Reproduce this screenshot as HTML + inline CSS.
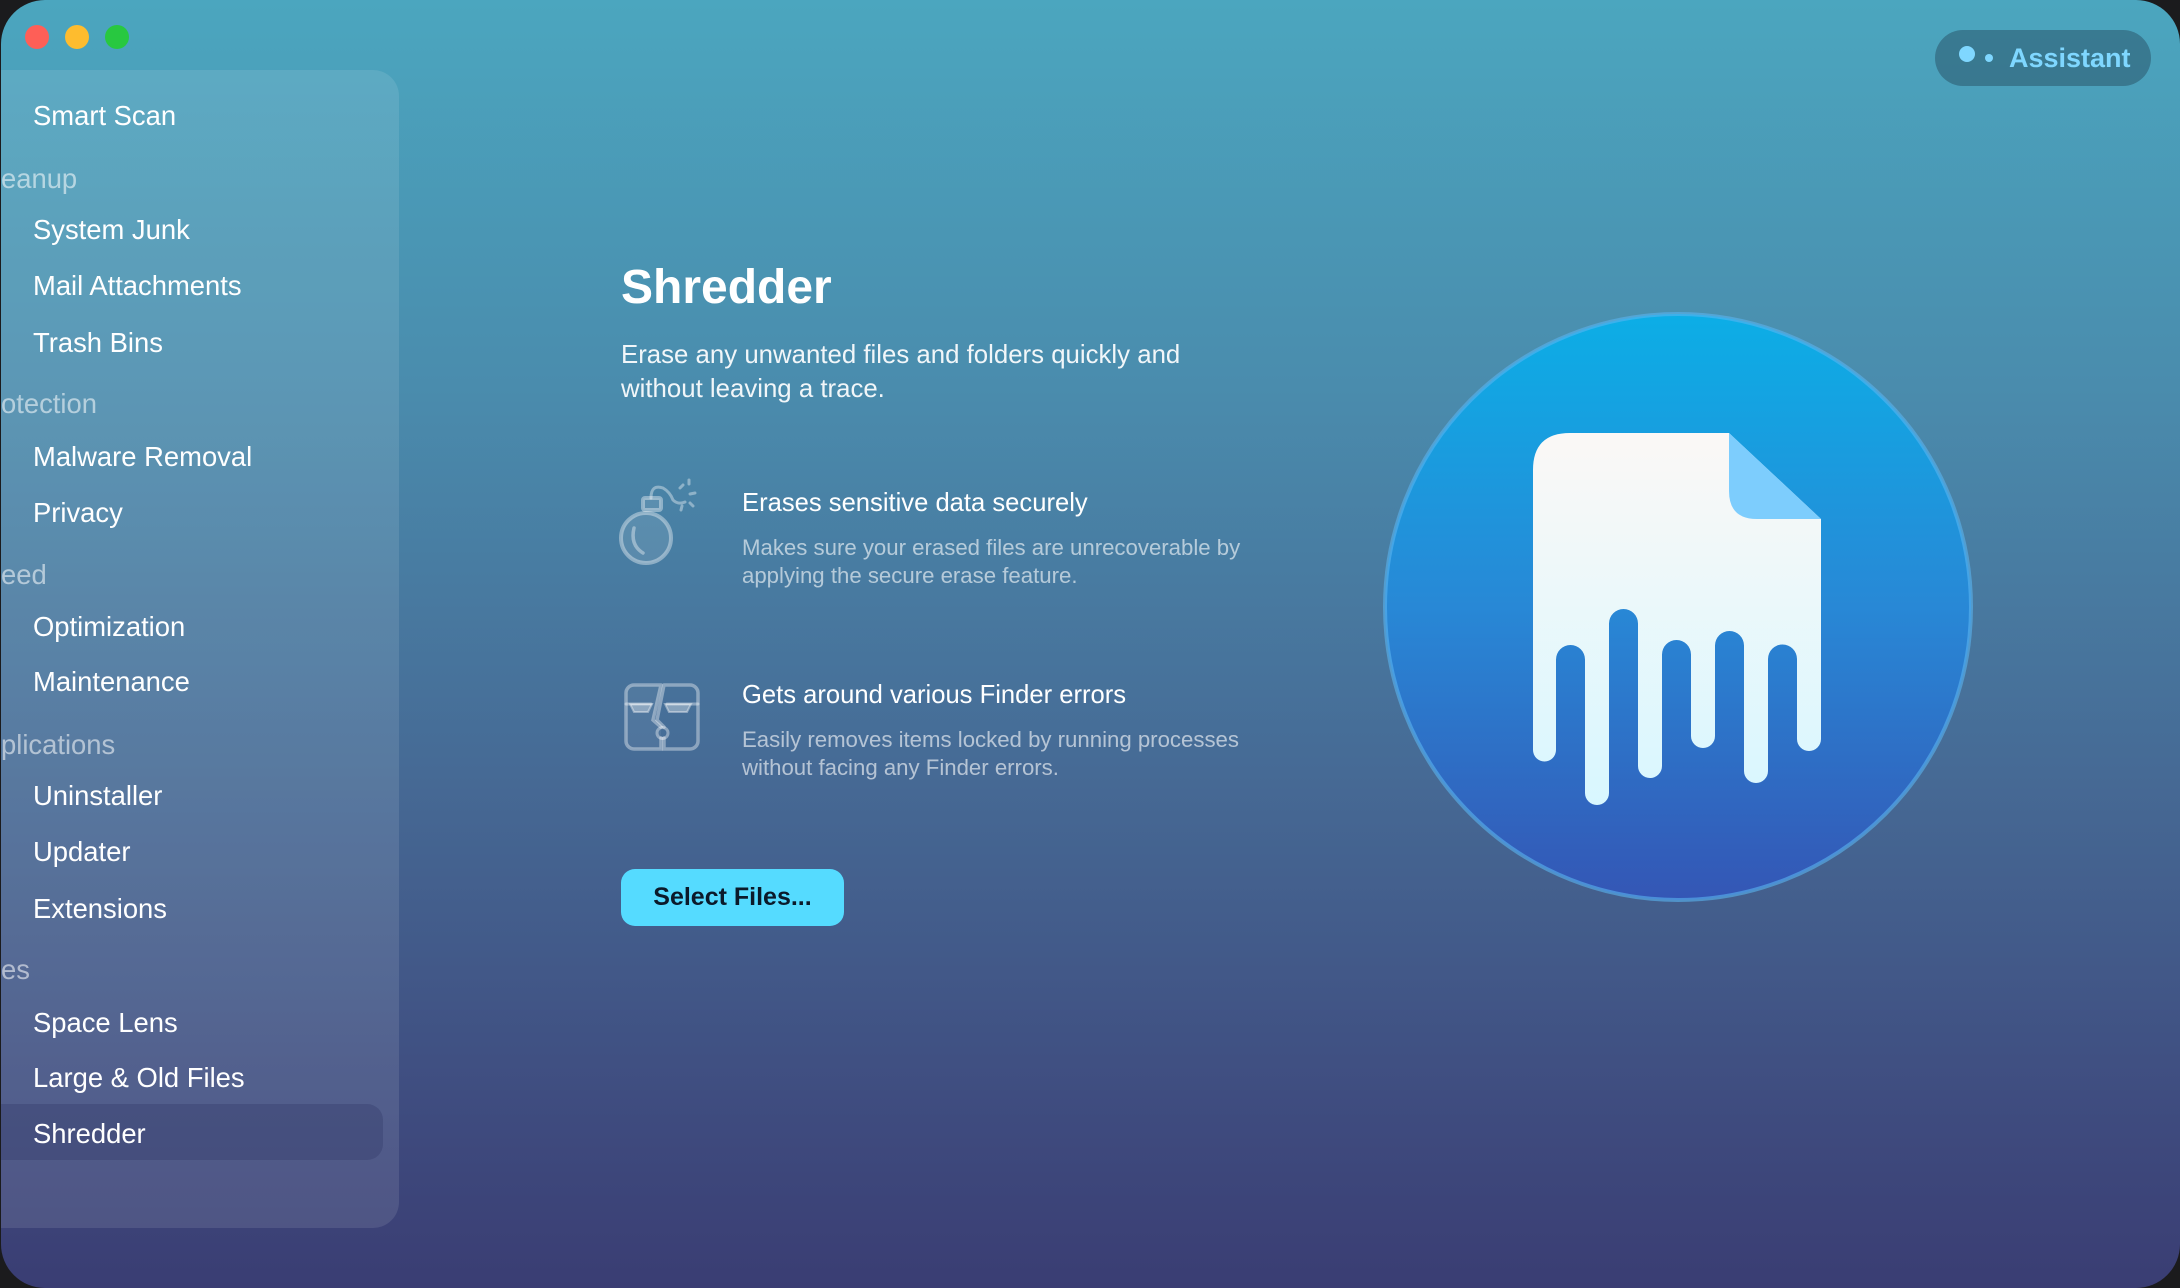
<!DOCTYPE html>
<html><head><meta charset="utf-8"><style>
*{margin:0;padding:0;box-sizing:border-box}
html,body{width:2180px;height:1288px;overflow:hidden;background:#1b1b1d;font-family:"Liberation Sans",sans-serif}
.win{position:absolute;left:1px;top:0;width:2179px;height:1288px;border-radius:44px;overflow:hidden;
background:linear-gradient(180deg,#4ba6bf 0%,#4a8cad 30%,#466a95 60%,#3f4d80 85%,#3a3d73 100%)}
.tl{position:absolute;top:25px;width:24px;height:24px;border-radius:50%}
.side{position:absolute;left:-1px;top:70px;width:399px;height:1158px;border-radius:0 26px 26px 0;background:rgba(255,255,255,0.1)}
.it{position:absolute;left:32px;color:#fff;font-size:27.4px;line-height:30px}
.hd{position:absolute;left:0;color:rgba(255,255,255,0.55);font-size:27.4px;line-height:30px}
.sel{position:absolute;left:0;top:1104px;width:382px;height:56px;border-radius:0 16px 16px 0;background:rgba(55,65,110,0.45)}
.t{position:absolute;color:#fff}
</style></head><body>
<div class="win">
<div class="tl" style="left:24px;background:#fe5f57"></div>
<div class="tl" style="left:64px;background:#febc2e"></div>
<div class="tl" style="left:104px;background:#28c840"></div>
<div class="side"></div>
<div class="sel"></div>
<div class="it" style="top:101px">Smart Scan</div>
<div class="hd" style="top:164px">eanup</div>
<div class="it" style="top:215px">System Junk</div>
<div class="it" style="top:271px">Mail Attachments</div>
<div class="it" style="top:328px">Trash Bins</div>
<div class="hd" style="top:389px">otection</div>
<div class="it" style="top:442px">Malware Removal</div>
<div class="it" style="top:498px">Privacy</div>
<div class="hd" style="top:560px">eed</div>
<div class="it" style="top:612px">Optimization</div>
<div class="it" style="top:667px">Maintenance</div>
<div class="hd" style="top:730px">plications</div>
<div class="it" style="top:781px">Uninstaller</div>
<div class="it" style="top:837px">Updater</div>
<div class="it" style="top:894px">Extensions</div>
<div class="hd" style="top:955px">es</div>
<div class="it" style="top:1008px">Space Lens</div>
<div class="it" style="top:1063px">Large &amp; Old Files</div>
<div class="it" style="top:1119px">Shredder</div>

<div style="position:absolute;left:1934px;top:30px;width:216px;height:56px;border-radius:28px;background:rgba(35,70,90,0.45)"></div>
<div style="position:absolute;left:1958px;top:46px;width:16px;height:16px;border-radius:50%;background:#7fd7ff"></div>
<div style="position:absolute;left:1984px;top:54px;width:8px;height:8px;border-radius:50%;background:#7fd7ff"></div>
<div class="t" style="left:2008px;top:42px;font-size:27px;font-weight:bold;color:#7fd7ff;line-height:32px">Assistant</div>

<div class="t" style="left:620px;top:258px;font-size:48px;font-weight:bold;line-height:60px">Shredder</div>
<div class="t" style="left:620px;top:338px;font-size:25.8px;line-height:34px;color:rgba(255,255,255,0.92)">Erase any unwanted files and folders quickly and<br>without leaving a trace.</div>

<svg style="position:absolute;left:600px;top:460px" width="120" height="320" viewBox="600 460 120 320" fill="none" stroke="rgba(255,255,255,0.38)" stroke-width="4" stroke-linecap="round">
<circle cx="645" cy="538" r="25" fill="rgba(255,255,255,0.1)"/>
<path d="M633 528 Q629 545 642 553" stroke-width="3.5"/>
<rect x="642" y="498" width="18" height="12" rx="2" fill="rgba(255,255,255,0.1)"/>
<path d="M650 498 Q650 484 662 488 Q669 492 672 500 Q677 505 684 502" stroke-width="3"/>
<path d="M679 488 l3 -3 M688 484 l0 -4 M689 494 l5 -1 M681 506 l-1 4 M689 503 l3 3" stroke-width="3"/>
<path d="M663 685 h26 a8 8 0 0 1 8 8 v48 a8 8 0 0 1 -8 8 h-26 v-11 M663 727 l-7 -7 l7 -35" stroke-width="3.5"/>
<path d="M660 685 h-27 a8 8 0 0 0 -8 8 v48 a8 8 0 0 0 8 8 h27 v-11 M660 727 l-8 -7 l8 -35" stroke-width="3.5" fill="rgba(255,255,255,0.06)"/>
<path d="M625 704 h25 M666 704 h31" stroke-width="3"/>
<circle cx="661.5" cy="733" r="5.5" stroke-width="3"/>
<path d="M629 704 h22 l-4 8 h-14 Z M664 704 h26 l-4 8 h-18 Z" fill="rgba(255,255,255,0.35)" stroke-width="2"/>
</svg>

<div class="t" style="left:741px;top:488px;font-size:25.6px;line-height:30px">Erases sensitive data securely</div>
<div class="t" style="left:741px;top:534px;font-size:22.2px;line-height:28px;color:rgba(255,255,255,0.6)">Makes sure your erased files are unrecoverable by<br>applying the secure erase feature.</div>
<div class="t" style="left:741px;top:680px;font-size:25.6px;line-height:30px">Gets around various Finder errors</div>
<div class="t" style="left:741px;top:726px;font-size:22.2px;line-height:28px;color:rgba(255,255,255,0.6)">Easily removes items locked by running processes<br>without facing any Finder errors.</div>

<div style="position:absolute;left:620px;top:869px;width:223px;height:57px;border-radius:14px;background:#55dbff;color:#0b1a2a;font-size:25px;font-weight:bold;line-height:57px;text-align:center">Select Files...</div>

<svg style="position:absolute;left:0;top:0" width="2180" height="1288">
<defs>
<linearGradient id="cg" x1="0" y1="0" x2="0" y2="1"><stop offset="0" stop-color="#0caee6"/><stop offset="0.5" stop-color="#2888d6"/><stop offset="1" stop-color="#3456b5"/></linearGradient>
<linearGradient id="dg" x1="0" y1="0" x2="0" y2="1"><stop offset="0" stop-color="#fbf8f6"/><stop offset="1" stop-color="#d8f7ff"/></linearGradient>
</defs>
<circle cx="1677" cy="607" r="293" fill="url(#cg)" stroke="rgba(90,180,240,0.6)" stroke-width="4"/>
<path fill="url(#dg)" d="M1532,470 Q1532,433 1569,433 L1728,433 L1820,519 L1820,739 A12,12 0 0 1 1796,739 L1796,659 A14.5,14.5 0 0 0 1767,659 L1767,771 A12,12 0 0 1 1743,771 L1743,645.5 A14.5,14.5 0 0 0 1714,645.5 L1714,736 A12,12 0 0 1 1690,736 L1690,654.5 A14.5,14.5 0 0 0 1661,654.5 L1661,766 A12,12 0 0 1 1637,766 L1637,623.5 A14.5,14.5 0 0 0 1608,623.5 L1608,793 A12,12 0 0 1 1584,793 L1584,659.5 A14.5,14.5 0 0 0 1555,659.5 L1555,750 A11.5,11.5 0 0 1 1532,750 Z"/>
<path fill="#7dcdfd" d="M1728,433 L1820,519 L1756,519 Q1728,519 1728,491 Z"/>
</svg>
</div>
</body></html>
